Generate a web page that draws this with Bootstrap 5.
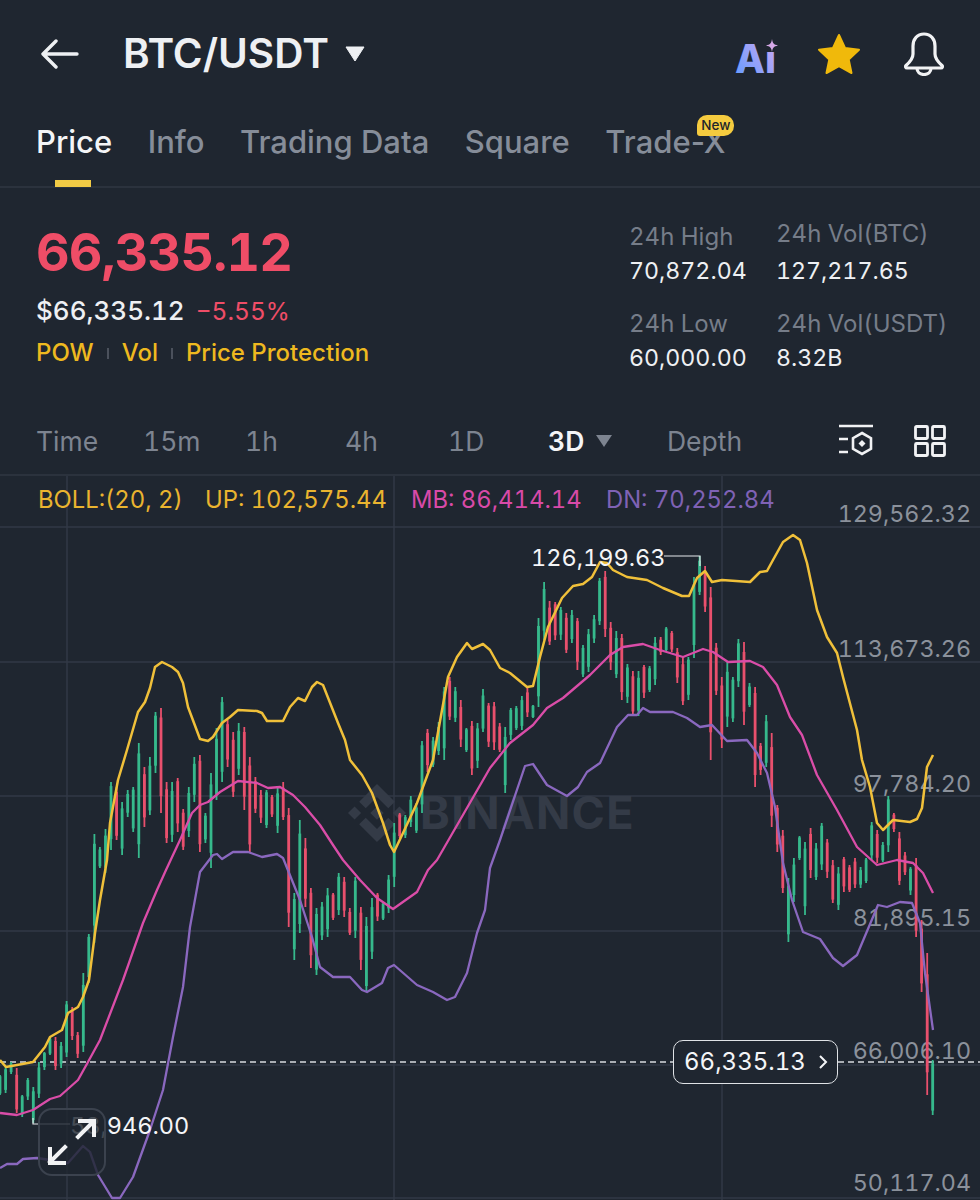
<!DOCTYPE html>
<html lang="en">
<head>
    <meta charset="UTF-8">
    <meta name="viewport" content="width=device-width, initial-scale=1.0">
    <title>BTC/USDT</title>
    <link href="https://cdn.jsdelivr.net/npm/bootstrap@5.3.0/dist/css/bootstrap.min.css" rel="stylesheet">
    <style>
        body {
            background-color: #1f2630;
            font-family: "Inter", "Liberation Sans", sans-serif;
            font-variant-numeric: tabular-nums;
            color: #eef0f3;
            width: 980px;
            height: 1200px;
            overflow: hidden;
        }
        .top-head { height: 108px; padding: 0 35px 0 41px; }
        .pair-name { font-size: 40.5px; font-weight: 600; margin-left: 44px; line-height: 1; }
        .pair-caret { margin-left: 16px; }
        .ai-logo { overflow: visible; }
        .star-icon { margin-left: 36px; }
        .bell-icon { margin-left: 42px; }
        .tab-bar { height: 80px; padding: 0 36px; gap: 35.5px; border-bottom: 2px solid #2b323d; align-items: flex-start; padding-top: 14px; }
        .tab-item { font-size: 31px; color: #868d99; position: relative; line-height: 40px; font-weight: 500; font-variant-numeric: normal; }
        .tab-item.on { color: #f4f5f7; }
        .tab-item.on::after { content: ""; position: absolute; left: 19px; width: 36px; height: 7px; top: 58px; background: #f2cb45; }
        .new-tag { position: absolute; left: 92px; top: -7px; background: #f5cb3f; color: #20242b; font-size: 13.5px; line-height: 21px; padding: 0 4px; border-radius: 10px 10px 10px 3px; font-weight: 500; }
        .quote-wrap { height: 220px; padding: 0 0 0 36px; }
        .last-price { font-size: 52px; font-weight: 700; color: #ef4d67; line-height: 1; margin-top: 39px; letter-spacing: -.8px; }
        .fiat-line { font-size: 26px; margin-top: 17px; line-height: 30px; font-weight: 500; }
        .fiat-line span { color: #ef4d67; font-size: 24.5px; font-weight: 400; margin-left: 4px; }
        .tag-line { font-size: 24px; color: #eeb91f; margin-top: 12px; line-height: 30px; font-weight: 500; gap: 13px; }
        .tag-sep { width: 2px; height: 11px; background: #4b515c; }
        .stat-area { padding-top: 34px; }
        .stat-col { width: 147px; }
        .stat-col.wide { width: 204px; }
        .stat-label { font-size: 24px; color: #767d89; line-height: 30px; }
        .stat-label.raised { margin-top: -3px; margin-bottom: 7px; }
        .stat-value { font-size: 23.2px; color: #eef0f3; line-height: 30px; margin-top: 4px; }
        .stat-box { height: 87px; display: flow-root; }
        .range-bar { height: 68px; border-bottom: 2px solid #2b323d; padding-left: 36px; }
        .range-list { display: grid; grid-template-columns: 107px 102px 100px 103px 100px 119px auto; font-size: 26.500px; color: #7d8490; line-height: 1; }
        .range-on { color: #f4f5f7; font-weight: 600; }
        .range-caret { margin-left: 12px; }
        .chart-wrap { position: relative; height: 724px; overflow: hidden; }
        .chart-layer { position: absolute; left: 0; top: 0; width: 980px; height: 724px; }
        .boll-line { position: absolute; left: 38px; top: 10px; font-size: 23.8px; line-height: 28px; white-space: nowrap; }
        .boll-line span { position: absolute; top: 0; }
        .axis-tag { position: absolute; right: 9px; font-size: 23.3px; line-height: 30px; color: #8b919b; }
        .mark-tag { position: absolute; font-size: 23.5px; line-height: 30px; color: #f4f5f7; }
        .brand-mark { position: absolute; left: 348px; top: 308px; color: #343b47; display: flex; align-items: center; gap: 14px; font-size: 45px; font-weight: 700; line-height: 58px; letter-spacing: 1.400px; }
        .now-pill { position: absolute; left: 673px; top: 564px; width: 165px; height: 44px; background: #1f2630; border: 1.5px solid #dfe2e6; border-radius: 10px; font-size: 24px; color: #f4f5f7; }
        .pill-text { margin-left: -2px; padding-left: 4px; }
        .zoom-btn { position: absolute; left: 38px; top: 632px; width: 68px; height: 68px; border: 2px solid #3b424e; border-radius: 14px; background: rgba(31, 38, 48, .82); }
    </style>
</head>
<body>
    <!-- Cabecera -->
    <div class="top-head d-flex align-items-center">
        <svg width="38" height="30" viewBox="0 0 38 30" fill="none" stroke="#eef0f3" stroke-width="3.400" stroke-linecap="round" stroke-linejoin="round"><path d="M36 15H2M15 2 2 15l13 13"/></svg>
        <div class="pair-name">BTC/USDT</div>
        <svg class="pair-caret" width="20" height="16" viewBox="0 0 20 16"><path d="M1 1h18L10 15z" fill="#eef0f3" stroke="#eef0f3" stroke-linejoin="round"/></svg>
        <div class="ms-auto d-flex align-items-center">
            <svg class="ai-logo" width="46" height="42" viewBox="0 0 46 42">
                <defs><linearGradient id="aiFill" x1="0" y1="1" x2="1" y2="0"><stop offset="0" stop-color="#5f9bff"/><stop offset="1" stop-color="#d2a9f2"/></linearGradient></defs>
                <text x="0" y="39.500" font-family="Inter, sans-serif" font-size="39" font-weight="800" fill="url(#aiFill)">Ai</text>
                <rect x="27" y="3" width="18" height="16" fill="#1f2630"/>
                <path d="M37 6c.7 4.500 1.700 5.500 6 6.500-4.300 1-5.300 2-6 6.500-.7-4.500-1.700-5.500-6-6.500 4.300-1 5.300-2 6-6.500z" fill="#d6a9e8"/>
            </svg>
            <svg class="star-icon" width="44" height="42" viewBox="0 0 44 42"><path d="M22 2l6 13 14 1.800-10.300 9.700L34.500 40 22 33.200 9.500 40l2.800-13.500L2 16.800 16 15z" fill="#f0b90b" stroke="#f0b90b" stroke-width="2" stroke-linejoin="round"/></svg>
            <svg class="bell-icon" width="42" height="44" viewBox="0 0 42 44" fill="none" stroke="#f1f2f4" stroke-width="3.200" stroke-linejoin="round"><path d="M21 2c-7 0-11 5.500-11 12v8c0 4-3 8-7 11.500-1 1-.4 2.500 1 2.500h34c1.400 0 2-1.500 1-2.500C35 30 32 26 32 22v-8C32 7.500 28 2 21 2z"/><path d="M14 36c0 4 3 6.500 7 6.500s7-2.500 7-6.500"/></svg>
        </div>
    </div>

    <!-- Pestañas -->
    <div class="tab-bar d-flex">
        <div class="tab-item on">Price</div>
        <div class="tab-item">Info</div>
        <div class="tab-item">Trading Data</div>
        <div class="tab-item">Square</div>
        <div class="tab-item">Trade-X<span class="new-tag">New</span></div>
    </div>

    <!-- Precio y estadísticas -->
    <div class="quote-wrap d-flex justify-content-between">
        <div>
            <div class="last-price">66,335.12</div>
            <div class="fiat-line">$66,335.12 <span>−5.55%</span></div>
            <div class="tag-line d-flex align-items-center">
                <div>POW</div><div class="tag-sep"></div><div>Vol</div><div class="tag-sep"></div><div>Price Protection</div>
            </div>
        </div>
        <div class="stat-area d-flex">
            <div class="stat-col">
                <div class="stat-box"><div class="stat-label">24h High</div><div class="stat-value">70,872.04</div></div>
                <div class="stat-box"><div class="stat-label">24h Low</div><div class="stat-value">60,000.00</div></div>
            </div>
            <div class="stat-col wide">
                <div class="stat-box"><div class="stat-label raised">24h Vol(BTC)</div><div class="stat-value">127,217.65</div></div>
                <div class="stat-box"><div class="stat-label">24h Vol(USDT)</div><div class="stat-value">8.32B</div></div>
            </div>
        </div>
    </div>

    <!-- Intervalos -->
    <div class="range-bar d-flex align-items-center">
        <div class="range-list">
            <div>Time</div><div>15m</div><div>1h</div><div>4h</div><div>1D</div>
            <div class="d-flex align-items-center"><span class="range-on">3D</span><svg class="range-caret" width="16" height="12" viewBox="0 0 16 12"><path d="M0 0h16L8 12z" fill="#7d8490"/></svg></div>
            <div>Depth</div>
        </div>
        <div class="ms-auto d-flex align-items-center">
            <svg width="36" height="34" viewBox="0 0 36 34" fill="none" stroke="#f1f2f4" stroke-width="2.600"><path d="M1 2h34M1 15h9M1 28h9"/><path d="M24 9l9 5.200v10.600L24 30l-9-5.200V14.200z"/><path d="M24 16l3.500 3.500L24 23l-3.500-3.500z" fill="#f1f2f4" stroke="none"/></svg>
            <svg style="margin-left:40px;margin-right:34px" width="32" height="32" viewBox="0 0 32 32" fill="none" stroke="#f1f2f4" stroke-width="2.800"><rect x="1.500" y="1.500" width="12" height="12" rx="1"/><rect x="18.500" y="1.500" width="12" height="12" rx="1"/><rect x="1.500" y="18.500" width="12" height="12" rx="1"/><rect x="18.500" y="18.500" width="12" height="12" rx="1"/></svg>
        </div>
    </div>

    <!-- Gráfico -->
    <div class="chart-wrap">
        <svg class="chart-layer" viewBox="0 476 980 724">
            <path d="M0 527H980M0 662H980M0 796H980M0 931H980M0 1065H980M0 1198H980M67 476V1200M394 476V1200M722 476V1200" stroke="#323946" stroke-width="1.500" fill="none"/>
        </svg>
        <div class="brand-mark">
            <svg width="58" height="58" viewBox="0 0 126.600 126.600" fill="currentColor"><path d="M38.700 53.200l24.600-24.600 24.600 24.600 14.300-14.300L63.300 0 24.400 38.900zM0 63.300L14.300 49l14.300 14.300-14.300 14.300zM38.700 73.400L63.300 98l24.600-24.600 14.300 14.300-38.900 38.900-38.900-38.900zM98 63.300L112.300 49l14.300 14.300-14.300 14.300zM77.800 63.300L63.300 48.800 48.800 63.300l14.500 14.500z"/></svg>
            <span>BINANCE</span>
        </div>
        <div class="axis-tag" style="top:23px">129,562.32</div>
        <div class="axis-tag" style="top:158px">113,673.26</div>
        <div class="axis-tag" style="top:293px">97,784.20</div>
        <div class="axis-tag" style="top:427px">81,895.15</div>
        <div class="axis-tag" style="top:560px">66,006.10</div>
        <div class="axis-tag" style="top:692px">50,117.04</div>
        <div class="boll-line">
            <span style="left:0;color:#eab42f">BOLL:(20, 2)</span>
            <span style="left:167px;color:#eab42f">UP: 102,575.44</span>
            <span style="left:373px;color:#d84aa8">MB: 86,414.14</span>
            <span style="left:568px;color:#7f62b5">DN: 70,252.84</span>
        </div>
        <svg class="chart-layer" id="priceChart" viewBox="0 476 980 724"></svg>
        <div class="mark-tag" style="left:531px;top:67px">126,199.63</div>
        <div class="mark-tag" style="left:70px;top:635px">58,946.00</div>
        <div class="now-pill d-flex align-items-center justify-content-between px-2">
            <span class="pill-text">66,335.13</span>
            <svg width="12" height="18" viewBox="0 0 12 18" fill="none" stroke="#f4f5f7" stroke-width="2"><path d="M3 3l6 6-6 6"/></svg>
        </div>
        <div class="zoom-btn d-flex align-items-center justify-content-center">
            <svg width="52" height="50" viewBox="0 0 52 50" fill="none" stroke="#f1f2f4" stroke-width="4" stroke-linecap="square"><path d="M32 20 47 5M34 4h14v14M19 30 4 45M4 32v14h14"/></svg>
        </div>
    </div>

    <script>
        // Velas: [verde?, máximo, mínimo] en coordenadas de la página
        const G = 1, R = 0;
        const candles = [
            [G,1075,1095],[G,1067,1093],[G,1062,1074],[R,1068,1113],[G,1095,1117],[G,1078,1100],[G,1087,1123],[G,1062,1098],[G,1052,1070],[G,1037,1055],
            [R,1037,1070],[G,1042,1068],[G,1001,1057],[R,1007,1040],[R,1032,1058],[G,973,1052],[G,934,983],[G,834,943],[G,847,868],[G,829,873],
            [G,782,850],[R,787,840],[G,802,855],[G,790,817],[G,787,832],[G,743,858],[R,767,827],[G,757,815],[G,712,773],[R,708,813],
            [R,782,843],[G,782,842],[R,778,832],[R,809,850],[G,787,837],[G,757,802],[R,755,852],[G,813,843],[G,773,868],[G,728,800],
            [G,697,782],[R,720,767],[R,732,797],[G,723,775],[R,727,810],[R,757,852],[R,777,813],[R,790,823],[G,790,828],[R,795,817],
            [G,788,833],[R,782,820],[R,808,927],[G,893,960],[G,820,933],[R,838,907],[R,888,968],[G,908,975],[G,902,940],[G,888,937],
            [R,893,920],[G,873,915],[R,877,917],[R,908,935],[G,877,938],[R,907,970],[G,917,992],[G,898,959],[R,893,921],[G,902,920],
            [G,875,913],[G,823,887],[R,813,838],[G,815,838],[G,796,827],[G,803,833],[G,741,813],[R,729,772],[G,737,767],[G,722,755],
            [G,687,760],[R,677,720],[G,687,722],[R,700,747],[G,728,752],[R,721,775],[G,723,768],[G,689,732],[R,703,747],[R,702,750],
            [R,723,752],[G,727,793],[G,708,740],[G,706,730],[G,696,730],[R,688,717],[G,705,718],[G,618,707],[G,582,640],[R,601,645],
            [R,602,640],[G,607,640],[R,613,653],[G,610,643],[R,618,670],[G,645,677],[G,629,672],[G,615,643],[G,578,625],[R,571,637],
            [R,622,670],[G,631,678],[R,634,700],[G,664,703],[R,671,715],[G,671,716],[R,665,698],[G,666,692],[G,637,685],[R,637,655],
            [G,627,652],[R,631,652],[R,648,683],[R,657,705],[G,657,700],[G,577,658],[G,556,595],[R,566,612],[R,587,760],[R,643,695],
            [R,677,748],[G,662,727],[G,677,722],[G,639,687],[R,642,725],[G,683,707],[R,687,787],[R,743,775],[G,715,767],[R,733,827],
            [R,805,852],[R,830,893],[G,878,942],[G,858,902],[G,836,860],[G,842,915],[R,828,878],[G,843,880],[G,823,870],[R,839,878],
            [R,860,903],[G,867,910],[R,857,892],[R,865,892],[R,858,888],[G,867,888],[G,858,883],[G,822,860],[R,830,863],[G,842,862],
            [G,796,852],[R,813,832],[R,832,885],[R,852,875],[G,867,895],[R,858,937],[R,920,992],[R,953,1095],[G,1060,1115]
        ];

        const upperBand = "0,1060 6,1067 17,1065 33,1062 45,1047 50,1037 62,1030 68,1013 78,1007 83,997 89,980 95,933 100,900 107,860 110,823 118,780 127,750 138,712 145,702 150,688 155,667 162,662 172,667 178,672 183,683 188,707 200,739 208,741 213,737 222,723 230,717 238,710 257,711 262,713 267,721 283,721 290,707 298,698 305,701 312,687 317,682 323,685 338,723 345,740 350,760 362,775 372,793 383,823 390,845 394,852 403,833 417,803 433,760 448,677 457,657 467,643 472,649 483,644 490,650 500,668 510,673 527,687 533,686 540,657 548,627 562,598 573,586 583,584 592,577 600,562 607,563 613,570 627,577 647,580 663,588 682,596 689,596 697,578 705,571 712,582 722,580 750,582 760,572 767,571 773,560 783,542 793,535 800,540 807,563 817,610 827,637 837,653 843,677 857,730 862,760 870,787 877,823 883,830 893,820 910,822 917,819 922,808 927,767 933,755";
        const middleBand = "0,1113 17,1115 33,1110 50,1099 60,1096 78,1080 88,1062 100,1040 123,980 143,923 157,890 166,870 180,840 192,813 200,805 208,802 220,792 238,781 257,783 268,788 280,787 293,795 305,807 320,825 333,845 343,860 360,880 377,898 393,909 417,892 428,870 437,860 490,768 510,743 533,725 547,708 563,698 590,675 610,655 623,647 643,644 660,650 683,657 703,649 713,652 728,662 750,661 763,667 777,685 790,717 802,735 817,775 837,810 857,847 877,865 897,860 913,863 923,873 933,893";
        const lowerBand = "0,1168 7,1164 17,1164 23,1159 37,1158 50,1160 68,1163 83,1146 90,1152 98,1175 112,1198 120,1198 133,1177 150,1130 163,1090 173,1037 183,987 190,927 200,872 213,855 217,854 222,859 233,852 248,852 262,857 277,854 283,858 300,900 312,937 320,967 333,977 350,977 362,990 367,992 382,983 388,968 394,965 417,985 433,992 447,1000 455,997 467,973 477,933 485,910 490,868 500,840 525,766 533,764 547,785 567,796 578,787 587,772 600,763 617,727 628,715 637,715 643,708 650,712 673,712 687,718 700,727 712,725 727,741 747,740 757,753 767,773 775,807 783,863 792,900 803,932 820,939 833,958 843,966 857,955 873,917 878,905 887,907 900,902 912,903 920,923 925,973 933,1030";

        // Dibujar velas y bandas dentro del SVG
        const drawChart = () => {
            let out = '<path d="M0 1062H673M838 1062H980" stroke="#d9dce0" stroke-width="1.500" stroke-dasharray="6 4"/>';
            candles.forEach((c, i) => {
                const x = (i * 5.552).toFixed(1);
                const color = c[0] ? '#36b98c' : '#e9506d';
                const span = c[2] - c[1];
                const top = c[1] + span * (0.06 + (i % 4) * 0.03);
                const bottom = c[2] - span * (0.08 + (i % 3) * 0.04);
                out += `<path d="M${x} ${c[1]}V${c[2]}" stroke="${color}" stroke-width="1.800"/>`;
                out += `<path d="M${x} ${top.toFixed(1)}V${bottom.toFixed(1)}" stroke="${color}" stroke-width="2.800"/>`;
            });
            out += `<polyline points="${lowerBand}" fill="none" stroke="#8a68bf" stroke-width="2.300" stroke-linejoin="round"/>`;
            out += `<polyline points="${middleBand}" fill="none" stroke="#da4da8" stroke-width="2.300" stroke-linejoin="round"/>`;
            out += `<polyline points="${upperBand}" fill="none" stroke="#f0c03a" stroke-width="2.500" stroke-linejoin="round"/>`;
            out += '<path d="M664 556H700V566M33 1118V1124H70" fill="none" stroke="#e6e8eb" stroke-width="1.200"/>';
            document.getElementById('priceChart').innerHTML = out;
        };

        drawChart();
    </script>
    <script src="https://cdn.jsdelivr.net/npm/bootstrap@5.3.0/dist/js/bootstrap.bundle.min.js"></script>
</body>
</html>
